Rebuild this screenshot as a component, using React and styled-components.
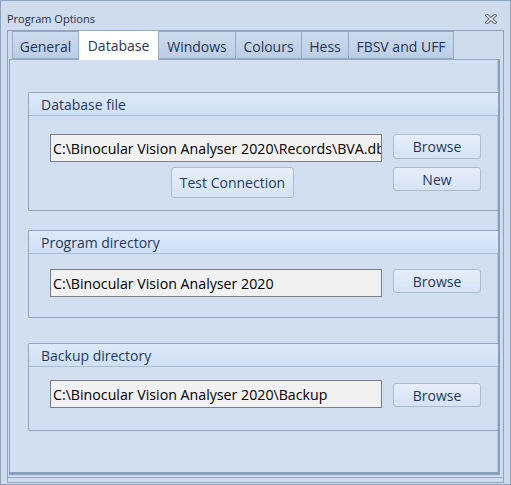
import React from "react";
import styled, { createGlobalStyle } from "styled-components";

const Global = createGlobalStyle`
  html, body { margin: 0; padding: 0; background: #cfdcee; }
  body { font-family: "Open Sans", "Noto Sans", sans-serif; }
`;

const Window = styled.div`
  box-sizing: border-box;
  width: 511px;
  height: 485px;
  border: 1px solid #8ea2bd;
  background: #cfdcee;
  display: flex;
  flex-direction: column;
`;

const TitleBar = styled.div`
  height: 29px;
  display: flex;
  align-items: center;
  justify-content: space-between;
  padding: 0 13px 0 6px;
  box-sizing: border-box;
  font-size: 11px;
  color: #1e2e45;
  padding-top: 5px;
`;

const CloseIcon = styled.svg`
  width: 12px;
  height: 10px;
  margin-top: 2px;
`;

const Frame = styled.div`
  box-sizing: border-box;
  margin-left: 6px;
  width: 497px;
  height: 453px;
  border: 1px solid #8ea3c0;
  display: flex;
  flex-direction: column;
  position: relative;
`;

const TabStrip = styled.div`
  display: flex;
  align-items: flex-end;
  height: 28px;
  padding-left: 4px;
  position: relative;
  z-index: 2;
`;

const Tab = styled.div`
  box-sizing: border-box;
  width: ${(p) => p.w}px;
  height: ${(p) => (p.active ? 30 : 28)}px;
  margin-bottom: ${(p) => (p.active ? -1 : 0)}px;
  margin-top: ${(p) => (p.active ? -2 : 0)}px;
  align-self: flex-end;
  display: flex;
  align-items: center;
  justify-content: center;
  font-size: 14px;
  color: #1f3657;
  background: ${(p) =>
    p.active ? "#ffffff" : "linear-gradient(#cddbee, #bccee6)"};
  border: 1px solid #93a9c6;
  border-bottom: ${(p) => (p.active ? "none" : "1px solid #93a9c6")};
  margin-right: -1px;
  padding-top: ${(p) => (p.active ? 0 : 2)}px;
`;

const Page = styled.div`
  box-sizing: border-box;
  margin-left: 1px;
  width: 491px;
  height: 416px;
  background: #d2dff0;
  border-top: 1px solid #93a9c6;
  border-left: 1px solid #8ba0bf;
  border-right: 2px solid #8ba0bf;
  border-bottom: 3px solid #8ba0bf;
  box-shadow: inset -1px 0 0 #b5c6dd;
  padding: 32px 0 0 18px;
  display: flex;
  flex-direction: column;
`;

const TabBottom = styled.div`
  margin-top: 2px;
  height: 1px;
  background: #96abc7;
`;

const Group = styled.div`
  box-sizing: border-box;
  height: ${(p) => p.h}px;
  margin-bottom: ${(p) => p.gap}px;
  border: 1px solid #90a6c4;
  border-right: none;
  border-radius: 2px 0 0 2px;
  display: flex;
  flex-direction: column;
`;

const GroupHeader = styled.div`
  height: 22px;
  flex: none;
  border-bottom: 1px solid #a8bedb;
  background: linear-gradient(#dde9f8, #cfe0f5);
  padding-left: 12px;
  display: flex;
  align-items: center;
  font-size: 14px;
  color: #1f3a60;
`;

const GroupBody = styled.div`
  display: grid;
  grid-template-columns: 332px 88px;
  column-gap: 11px;
  row-gap: ${(p) => p.rowGap || 0}px;
  align-items: start;
  padding: ${(p) => p.pt}px 0 0 21px;
`;

const PathBox = styled.div`
  box-sizing: border-box;
  height: 28px;
  border: 1px solid #7b7f86;
  background: #f1f1f1;
  display: flex;
  align-items: center;
  padding-left: 2px;
  font-size: 14.2px;
  color: #000;
  white-space: nowrap;
  overflow: hidden;
`;

const Button = styled.div`
  box-sizing: border-box;
  height: ${(p) => p.h || 24}px;
  width: ${(p) => (p.w ? `${p.w}px` : "auto")};
  margin-top: ${(p) => p.mt || 0}px;
  margin-left: ${(p) => p.ml || 0}px;
  justify-self: ${(p) => (p.w ? "start" : "stretch")};
  border: 1px solid #a9bcd6;
  border-radius: 3px;
  background: linear-gradient(#e6eefa, #d6e3f4);
  display: flex;
  align-items: center;
  justify-content: center;
  font-size: 14px;
  color: #1f3a60;
`;

const tabs = [
  ["General", 67],
  ["Database", 81],
  ["Windows", 78],
  ["Colours", 67],
  ["Hess", 48],
  ["FBSV and UFF", 106],
];

export default function App() {
  return (
    <>
      <Global />
      <Window>
        <TitleBar>
          <span>Program Options</span>
          <CloseIcon viewBox="0 0 12 10">
            <path
              d="M2 1.5 L10 8.5 M10 1.5 L2 8.5"
              stroke="#55657a"
              strokeWidth="3.4"
              strokeLinecap="square"
            />
            <path
              d="M2 1.5 L10 8.5 M10 1.5 L2 8.5"
              stroke="#f6f8fc"
              strokeWidth="1.4"
              strokeLinecap="square"
            />
          </CloseIcon>
        </TitleBar>
        <Frame>
          <TabStrip>
            {tabs.map(([t, w]) => (
              <Tab key={t} w={w} active={t === "Database"}>
                {t}
              </Tab>
            ))}
          </TabStrip>
          <Page>
            <Group h={119} gap={19}>
              <GroupHeader>Database file</GroupHeader>
              <GroupBody pt={18} rowGap={5}>
                <PathBox>C:\Binocular Vision Analyser 2020\Records\BVA.db</PathBox>
                <Button h={25}>Browse</Button>
                <Button h={31} w={123} ml={121}>
                  Test Connection
                </Button>
                <Button h={24}>New</Button>
              </GroupBody>
            </Group>
            <Group h={88} gap={25}>
              <GroupHeader>Program directory</GroupHeader>
              <GroupBody pt={15}>
                <PathBox>C:\Binocular Vision Analyser 2020</PathBox>
                <Button h={24}>Browse</Button>
              </GroupBody>
            </Group>
            <Group h={88} gap={0}>
              <GroupHeader>Backup directory</GroupHeader>
              <GroupBody pt={13}>
                <PathBox>C:\Binocular Vision Analyser 2020\Backup</PathBox>
                <Button h={24} mt={3}>Browse</Button>
              </GroupBody>
            </Group>
          </Page>
          <TabBottom />
        </Frame>
      </Window>
    </>
  );
}
